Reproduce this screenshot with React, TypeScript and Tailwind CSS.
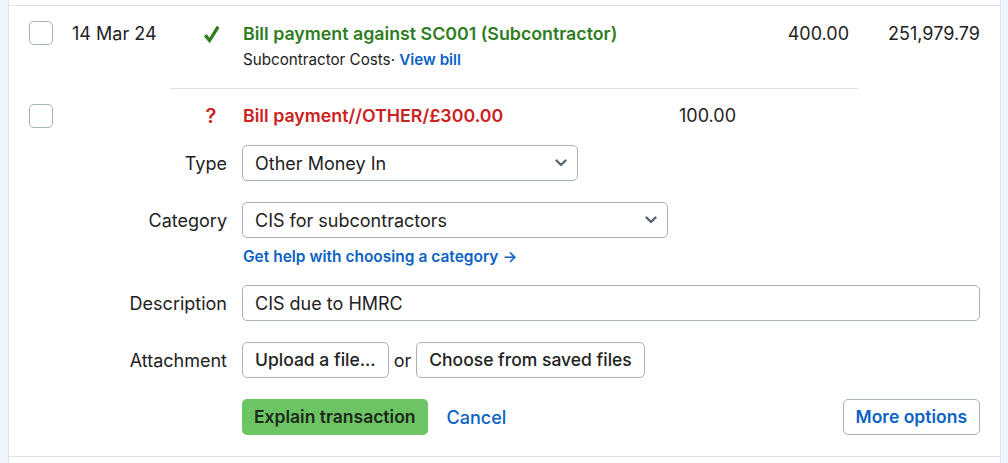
import React from 'react';

const Checkbox: React.FC = () => (
    <div className="w-6 h-6 rounded-[5px] border border-[#a9b1bb] bg-white shrink-0" />
);

const Chevron: React.FC = () => (
    <svg className="w-[12px] h-[8px]" viewBox="0 0 12 8" fill="none">
        <path d="M1.5 1.5 6 6l4.5-4.5" stroke="#5b6672" strokeWidth="2.4" strokeLinecap="round" strokeLinejoin="round" />
    </svg>
);

const Select: React.FC<{ value: string; width: string }> = ({ value, width }) => (
    <div className={`${width} h-9 rounded-[5px] border border-[#a9b1bb] bg-white flex items-center justify-between pl-3 pr-[10px]`}>
        <span>{value}</span>
        <Chevron />
    </div>
);

const FormRow: React.FC<{ label: string; children: React.ReactNode; className?: string }> = ({ label, children, className }) => (
    <div className={`flex items-center ${className ?? ''}`}>
        <div className="w-[218px] shrink-0 text-right">{label}</div>
        <div className="flex-1 pl-[15px] flex items-center">{children}</div>
    </div>
);

export default function App() {
    return (
        <div
            className="w-[1008px] h-[463px] bg-[#eef3fc] text-[#222] text-[18px] overflow-hidden"
            style={{ fontFamily: 'Inter, "Noto Sans", sans-serif' }}
        >
            <div className="ml-[8px] w-[993px] h-full bg-white border-x border-[#dde3ec] pt-[5px]">
                <div className="border-t border-[#dde3ec]">

                    {/* Explained row */}
                    <div className="flex pt-[15px] pr-[20px]">
                        <div className="pl-[20px]"><Checkbox /></div>
                        <div className="w-[144px] pl-[19px] pt-[1px] leading-[24px]">14 Mar 24</div>
                        <div className="w-[28px] flex justify-center pt-[4px]">
                            <svg className="w-[17px] h-[19px]" viewBox="0 0 16 18">
                                <path d="M0.8 10.6 3.4 8.5 6 12 13 0.8 15.6 2.6 6.3 17.2z" fill="#2f7d1f" />
                            </svg>
                        </div>
                        <div className="flex-1 pl-[18px]">
                            <div className="font-semibold text-[#2f7d1f] text-[17.8px] leading-[26px]">Bill payment against SC001 (Subcontractor)</div>
                            <div className="text-[15.2px] leading-[22px] mt-[2px]">
                                Subcontractor Costs· <span className="font-semibold text-[#0b62c4]">View bill</span>
                            </div>
                        </div>
                        <div className="w-[110px] text-right pt-[1px] leading-[24px]">400.00</div>
                        <div className="w-[110px] ml-[21px] text-right pt-[1px] leading-[24px]">251,979.79</div>
                    </div>

                    <div className="ml-[161px] mr-[142px] mt-[17px] border-t border-[#dde3ec]" />

                    {/* Unexplained row */}
                    <div className="flex pt-[15px] pr-[20px]">
                        <div className="pl-[20px]"><Checkbox /></div>
                        <div className="w-[144px]" />
                        <div className="w-[28px] text-center font-semibold text-[20px] text-[#cc2222] leading-[24px]">?</div>
                        <div className="w-[401px] pl-[18px] font-semibold text-[#cc2222] text-[17.8px] leading-[24px]">Bill payment//OTHER/£300.00</div>
                        <div className="w-[110px] text-right leading-[24px]">100.00</div>
                    </div>

                    {/* Explanation form */}
                    <div className="pr-[20px] mt-[17px]">
                        <FormRow label="Type">
                            <Select value="Other Money In" width="w-[336px]" />
                        </FormRow>
                        <FormRow label="Category" className="mt-[21px]">
                            <Select value="CIS for subcontractors" width="w-[426px]" />
                        </FormRow>
                        <div className="pl-[234px] mt-[9px] text-[15.5px] font-semibold text-[#0b62c4] leading-[20px]">
                            Get help with choosing a category →
                        </div>
                        <FormRow label="Description" className="mt-[18px]">
                            <div className="w-full h-9 rounded-[5px] border border-[#a9b1bb] bg-white flex items-center px-3">CIS due to HMRC</div>
                        </FormRow>
                        <FormRow label="Attachment" className="mt-[21px]">
                            <button className="h-9 px-3 rounded-[5px] border border-[#a9b1bb] bg-white font-medium text-[17.5px]">Upload a file...</button>
                            <span className="mx-[5px]">or</span>
                            <button className="h-9 px-3 rounded-[5px] border border-[#a9b1bb] bg-white font-medium text-[17.5px]">Choose from saved files</button>
                        </FormRow>
                        <div className="flex items-center pl-[233px] mt-[21px]">
                            <button className="h-9 px-3 rounded-[5px] bg-[#6cc464] font-semibold text-[17.5px] text-[#1d2a1b]">Explain transaction</button>
                            <span className="ml-[19px] text-[#0b62c4] font-medium">Cancel</span>
                            <button className="ml-auto h-9 px-3 rounded-[5px] border border-[#a9b1bb] bg-white font-semibold text-[17.5px] text-[#0b62c4]">More options</button>
                        </div>
                    </div>

                    <div className="mt-[21px] border-t border-[#dde3ec]" />
                </div>
            </div>
        </div>
    );
}
